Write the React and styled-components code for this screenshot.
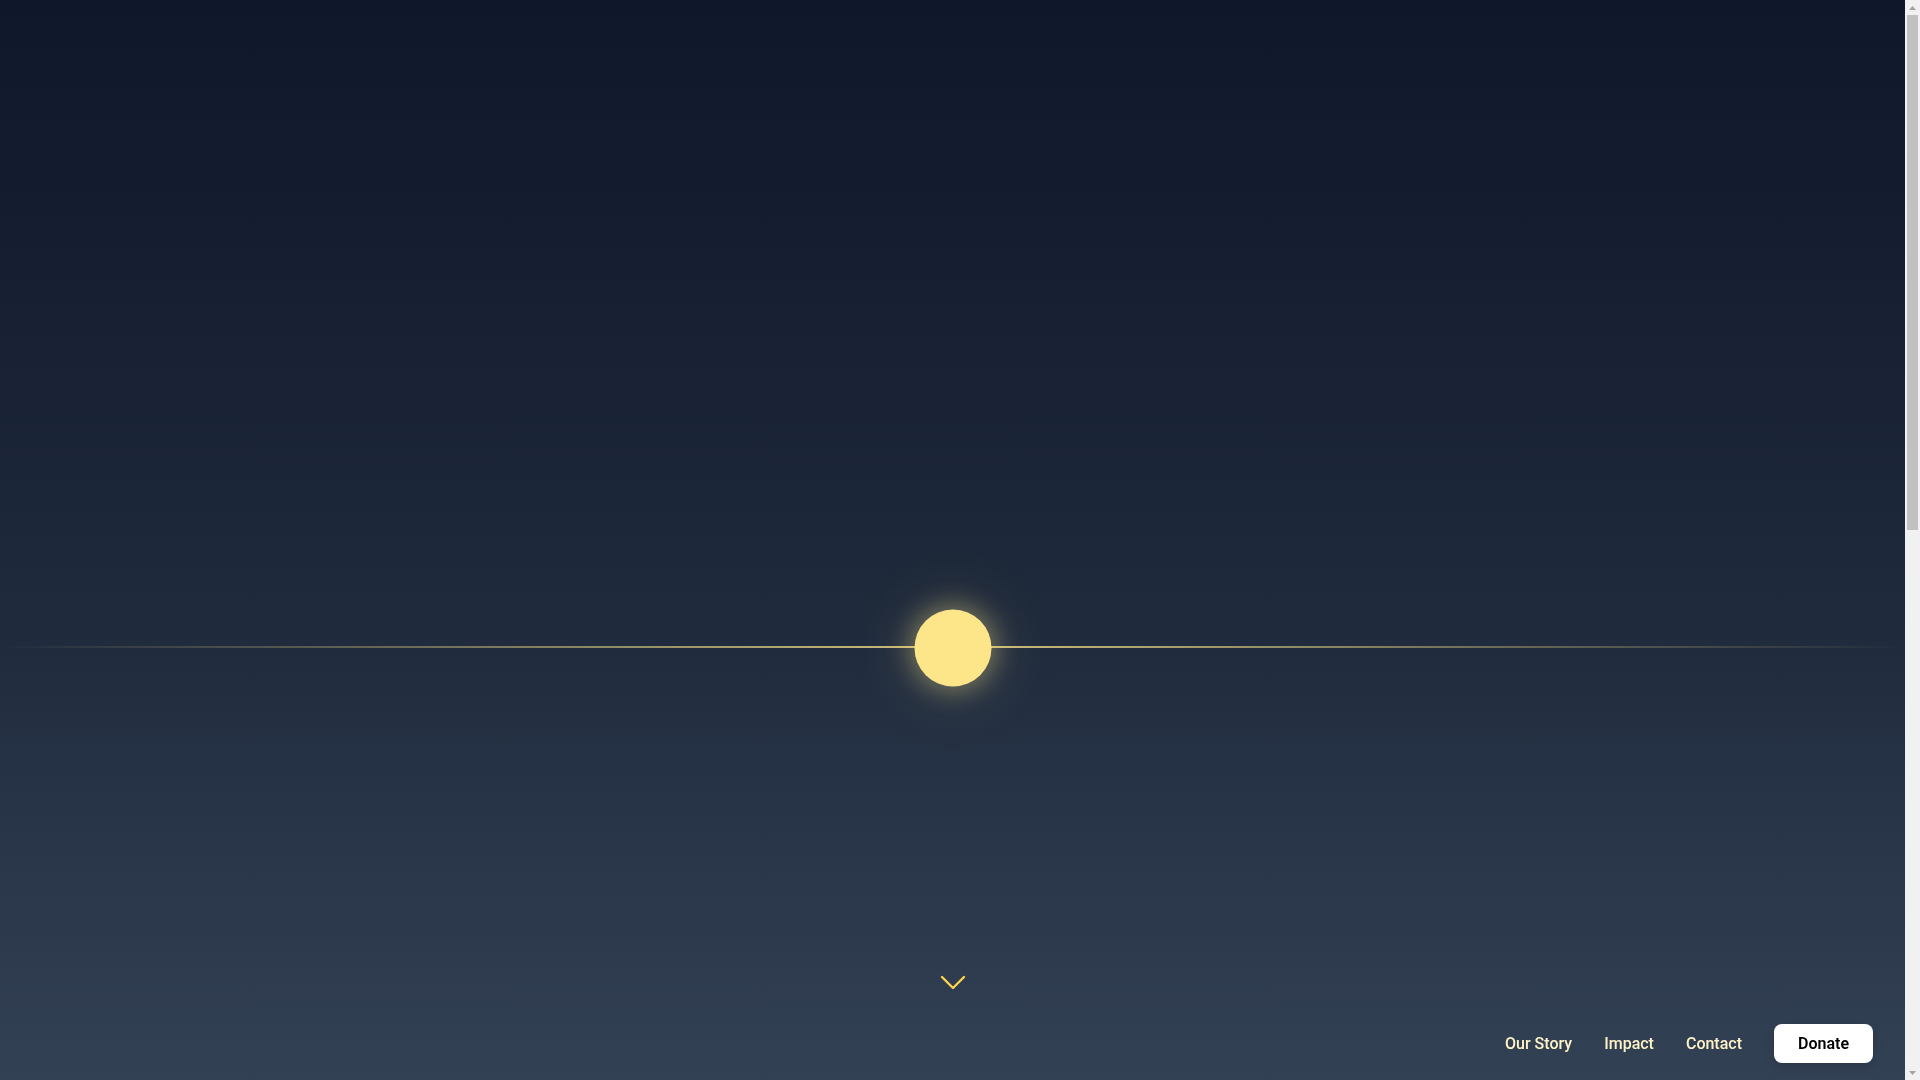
import React from 'react'
import styled, { createGlobalStyle } from 'styled-components'

const GlobalStyle = createGlobalStyle`
  * { box-sizing: border-box; }
  html, body {
    margin: 0;
    padding: 0;
    background: #0f172a;
    font-family: Roboto, "Liberation Sans", sans-serif;
  }
  body { padding-right: 15px; }
`

const Page = styled.main`
  display: flex;
  flex-direction: column;
`

const Hero = styled.section`
  position: relative;
  height: 100vh;
  background: linear-gradient(180deg, #0f172a 0%, #1e293b 55%, #334155 100%);
  overflow: hidden;
`

const Horizon = styled.div`
  position: absolute;
  left: 0;
  right: 0;
  top: 60%;
  height: 2px;
  transform: translateY(-2px);
  background: linear-gradient(90deg, rgba(253, 230, 138, 0) 0%, rgba(253, 230, 138, 0.8) 50%, rgba(253, 230, 138, 0) 100%);
`

const Sun = styled.div`
  position: absolute;
  left: 50%;
  top: 60%;
  width: 77px;
  height: 77px;
  border-radius: 50%;
  transform: translate(-50%, -50%);
  background: #fde68a;
  box-shadow: 0 0 24px 6px rgba(253, 230, 138, 0.35), 0 0 60px 18px rgba(253, 230, 138, 0.08);
`

const ScrollHint = styled.div`
  position: absolute;
  left: 50%;
  top: 974px;
  transform: translateX(-50%);
  color: #fcd34d;
  display: flex;
`

const Below = styled.section`
  height: 100vh;
  background: #334155;
`

const Nav = styled.nav`
  position: fixed;
  right: 47px;
  bottom: 17px;
  display: flex;
  align-items: center;
  gap: 32px;
`

const NavLink = styled.a`
  color: #fef3c7;
  font-size: 16px;
  font-weight: 500;
  text-decoration: none;
  cursor: pointer;
`

const DonateButton = styled.button`
  background: #ffffff;
  color: #000000;
  border: none;
  border-radius: 8px;
  padding: 10px 24px;
  font-family: inherit;
  font-size: 16px;
  font-weight: 600;
  line-height: 19px;
  box-shadow: 0 4px 10px rgba(0, 0, 0, 0.15);
  cursor: pointer;
`

/* stand-in for the browser's classic scrollbar */
const ScrollTrack = styled.div`
  position: fixed;
  top: 0;
  right: 0;
  width: 15px;
  height: 100vh;
  background: #f1f1f1;
  display: flex;
  flex-direction: column;
  align-items: center;
`

const ScrollArrow = styled.div`
  width: 15px;
  height: 15px;
  display: flex;
  align-items: center;
  justify-content: center;
  color: #a3a3a3;
  flex-shrink: 0;
`

const ScrollRail = styled.div`
  flex: 1;
  width: 100%;
  padding: 0 2px;
`

const ScrollThumb = styled.div`
  width: 100%;
  height: 49%;
  background: #c1c1c1;
`

const App = () => {
  return (
    <>
      <GlobalStyle />
      <Page>
        <Hero>
          <Horizon />
          <Sun />
          <ScrollHint>
            <svg width="26" height="18" viewBox="0 0 26 18" fill="none" stroke="currentColor" strokeWidth="2.4" strokeLinecap="round" strokeLinejoin="round">
              <path d="M2 3l11 11 11-11" />
            </svg>
          </ScrollHint>
        </Hero>
        <Below />
      </Page>
      <Nav>
        <NavLink>Our Story</NavLink>
        <NavLink>Impact</NavLink>
        <NavLink>Contact</NavLink>
        <DonateButton>Donate</DonateButton>
      </Nav>
      <ScrollTrack>
        <ScrollArrow>
          <svg width="7" height="4" viewBox="0 0 7 4"><path d="M3.5 0L7 4H0z" fill="currentColor" /></svg>
        </ScrollArrow>
        <ScrollRail>
          <ScrollThumb />
        </ScrollRail>
        <ScrollArrow>
          <svg width="7" height="4" viewBox="0 0 7 4"><path d="M0 0h7L3.5 4z" fill="currentColor" /></svg>
        </ScrollArrow>
      </ScrollTrack>
    </>
  )
}

export default App
